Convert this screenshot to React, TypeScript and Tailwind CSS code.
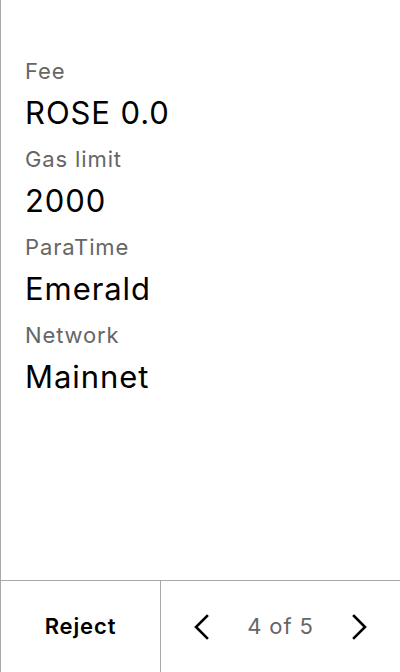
const rows = [
  { label: "Fee", value: "ROSE 0.0" },
  { label: "Gas limit", value: "2000" },
  { label: "ParaTime", value: "Emerald" },
  { label: "Network", value: "Mainnet" },
];

function Chevron({ dir }: { dir: "left" | "right" }) {
  return (
    <svg width="18" height="28" viewBox="0 0 18 28" fill="none" stroke="currentColor" strokeWidth="2.6" strokeLinecap="square" strokeLinejoin="miter">
      {dir === "left" ? <polyline points="15,3 4,14 15,25" /> : <polyline points="3,3 14,14 3,25" />}
    </svg>
  );
}

export default function App() {
  return (
    <div
      className="flex h-[672px] w-[400px] flex-col border-l border-[#a8a8a8] bg-white text-black"
      style={{ fontFamily: "Inter, 'Noto Sans', sans-serif" }}
    >
      <div className="flex flex-1 flex-col gap-3 pl-6 pt-[57px]">
        {rows.map((r) => (
          <div key={r.label} className="flex flex-col">
            <span className="text-[22px] leading-7 tracking-[0.04em] text-[#666666]">{r.label}</span>
            <span className="mt-2 text-[31px] leading-10 tracking-[0.03em]">{r.value}</span>
          </div>
        ))}
      </div>

      {/* footer */}
      <div className="flex h-[92px] border-t border-[#a8a8a8]">
        <button className="flex w-[160px] items-center justify-center border-r border-[#a8a8a8] text-[22px] font-semibold tracking-[0.04em]">
          Reject
        </button>
        <div className="flex flex-1 items-center justify-between px-[31px]">
          <Chevron dir="left" />
          <span className="text-[22px] tracking-[0.04em] text-[#666666]">4 of 5</span>
          <Chevron dir="right" />
        </div>
      </div>
    </div>
  );
}
